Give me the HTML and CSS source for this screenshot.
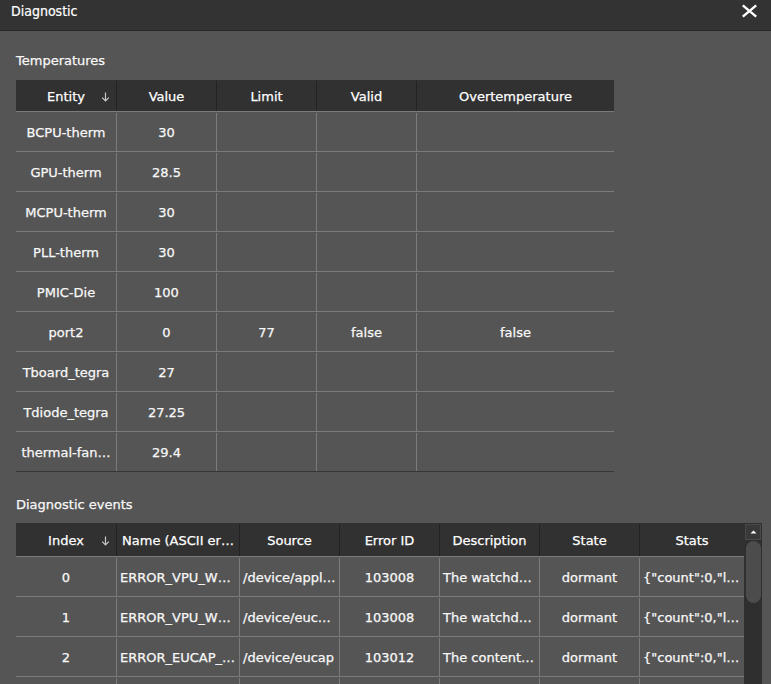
FILE: index.html
```html
<!DOCTYPE html>
<html lang="en">
<head>
<meta charset="utf-8">
<title>Diagnostic</title>
<link rel="stylesheet" href="styles.css">
</head>
<body>
<header class="titlebar">
  <span class="title">Diagnostic</span>
  <svg class="close" width="17" height="16" viewBox="0 0 17 16" aria-label="Close">
    <path d="M1.8 2.4 L15.2 13.6 M15.2 2.4 L1.8 13.6" stroke="#ffffff" stroke-width="2.4" fill="none"/>
  </svg>
</header>
<main class="content">
  <h2 class="section-label">Temperatures</h2>
  <div class="grid temps">
    <div class="row head">
      <div class="cell sortable">Entity<svg class="sort" width="9" height="10" viewBox="0 0 9 10"><path d="M4.5 0.5 V9 M1.2 5.6 L4.5 9 L7.8 5.6" stroke="#c8c8c8" stroke-width="1.2" fill="none"/></svg></div>
      <div class="cell">Value</div>
      <div class="cell">Limit</div>
      <div class="cell">Valid</div>
      <div class="cell">Overtemperature</div>
    </div>
    <div class="row"><div class="cell">BCPU-therm</div><div class="cell">30</div><div class="cell"></div><div class="cell"></div><div class="cell"></div></div>
    <div class="row"><div class="cell">GPU-therm</div><div class="cell">28.5</div><div class="cell"></div><div class="cell"></div><div class="cell"></div></div>
    <div class="row"><div class="cell">MCPU-therm</div><div class="cell">30</div><div class="cell"></div><div class="cell"></div><div class="cell"></div></div>
    <div class="row"><div class="cell">PLL-therm</div><div class="cell">30</div><div class="cell"></div><div class="cell"></div><div class="cell"></div></div>
    <div class="row"><div class="cell">PMIC-Die</div><div class="cell">100</div><div class="cell"></div><div class="cell"></div><div class="cell"></div></div>
    <div class="row"><div class="cell">port2</div><div class="cell">0</div><div class="cell">77</div><div class="cell">false</div><div class="cell">false</div></div>
    <div class="row"><div class="cell">Tboard_tegra</div><div class="cell">27</div><div class="cell"></div><div class="cell"></div><div class="cell"></div></div>
    <div class="row"><div class="cell">Tdiode_tegra</div><div class="cell">27.25</div><div class="cell"></div><div class="cell"></div><div class="cell"></div></div>
    <div class="row"><div class="cell">thermal-fan…</div><div class="cell">29.4</div><div class="cell"></div><div class="cell"></div><div class="cell"></div></div>
  </div>

  <h2 class="section-label events-label">Diagnostic events</h2>
  <div class="events-wrap">
    <div class="grid events">
      <div class="row head">
        <div class="cell sortable">Index<svg class="sort" width="9" height="10" viewBox="0 0 9 10"><path d="M4.5 0.5 V9 M1.2 5.6 L4.5 9 L7.8 5.6" stroke="#c8c8c8" stroke-width="1.2" fill="none"/></svg></div>
        <div class="cell">Name (ASCII er…</div>
        <div class="cell">Source</div>
        <div class="cell">Error ID</div>
        <div class="cell">Description</div>
        <div class="cell">State</div>
        <div class="cell">Stats</div>
      </div>
      <div class="row">
        <div class="cell">0</div><div class="cell left">ERROR_VPU_W…</div><div class="cell left">/device/appl…</div><div class="cell">103008</div><div class="cell left">The watchd…</div><div class="cell">dormant</div><div class="cell left">{"count":0,"l…</div>
      </div>
      <div class="row">
        <div class="cell">1</div><div class="cell left">ERROR_VPU_W…</div><div class="cell left">/device/euc…</div><div class="cell">103008</div><div class="cell left">The watchd…</div><div class="cell">dormant</div><div class="cell left">{"count":0,"l…</div>
      </div>
      <div class="row">
        <div class="cell">2</div><div class="cell left">ERROR_EUCAP_…</div><div class="cell left">/device/eucap</div><div class="cell">103012</div><div class="cell left">The content…</div><div class="cell">dormant</div><div class="cell left">{"count":0,"l…</div>
      </div>
      <div class="row">
        <div class="cell"></div><div class="cell"></div><div class="cell"></div><div class="cell"></div><div class="cell"></div><div class="cell"></div><div class="cell"></div>
      </div>
    </div>
    <div class="scrollbar">
      <div class="sb-up"><svg width="7" height="4" viewBox="0 0 7 4"><path d="M0.5 3.5 L3.5 0.5 L6.5 3.5 Z" fill="#ffffff"/></svg></div>
      <div class="sb-handle"></div>
    </div>
  </div>
</main>
</body>
</html>
```

FILE: styles.css
```css
html, body {
  margin: 0;
  padding: 0;
}

body {
  background: #555555;
  color: #f8f8f8;
  font-family: "DejaVu Sans", "Noto Sans", sans-serif;
  font-size: 13px;
  width: 771px;
  height: 684px;
  overflow: hidden;
}

.titlebar {
  height: 27px;
  padding: 3px 13px 0 11px;
  background: #333333;
  border-bottom: 1px solid #272727;
  display: flex;
  justify-content: space-between;
  align-items: flex-start;
}

.title {
  font-family: "Liberation Sans Narrow", "DejaVu Sans Condensed", sans-serif;
  font-size: 14px;
  line-height: 16px;
  color: #ffffff;
  -webkit-text-stroke: 0.2px #ffffff;
}

.close {
  display: block;
  margin-top: 0;
}

.content {
  padding-left: 16px;
}

.section-label {
  margin: 22px 0 11px;
  font-size: 13px;
  line-height: 16px;
  font-weight: normal;
  color: #f8f8f8;
  -webkit-text-stroke: 0.25px #f8f8f8;
}

.events-label {
  margin: 25px 0 10px;
}

.grid {
  display: flex;
  flex-direction: column;
}

.row {
  display: grid;
  flex-shrink: 0;
  height: 40px;
  box-sizing: border-box;
  border-top: 1px solid #7b7b7b;
  padding-top: 1px;
  -webkit-text-stroke: 0.25px #f8f8f8;
}

.temps {
  width: 598px;
  border-bottom: 1px solid #363636;
}

.temps .row {
  grid-template-columns: 101px 100px 100px 100px 197px;
}

.events .row {
  grid-template-columns: 101px 123px 100px 100px 100px 100px 104px;
}

.row.head {
  background: #313131;
  border-top: none;
  height: 31px;
  color: #ffffff;
  -webkit-text-stroke: 0.25px #ffffff;
}

.events .row.head {
  height: 33px;
}

.cell {
  position: relative;
  display: flex;
  align-items: center;
  justify-content: center;
  padding: 0 3px;
  box-sizing: border-box;
  border-right: 1px solid #7b7b7b;
  white-space: nowrap;
  overflow: hidden;
  min-width: 0;
}

.cell:last-child {
  border-right: none;
}

.head .cell {
  border-right-color: #222222;
}

.cell.left {
  justify-content: flex-start;
}

.sort {
  position: absolute;
  right: 6px;
  top: 50%;
  margin-top: -4px;
}

.events-wrap {
  display: flex;
  height: 161px;
  overflow: hidden;
}

.events {
  width: 728px;
  flex-shrink: 0;
}

.scrollbar {
  width: 18px;
  background: #2f2f2f;
  display: flex;
  flex-direction: column;
  align-items: center;
}

.sb-up {
  width: 16px;
  height: 16px;
  margin-top: 1px;
  box-sizing: border-box;
  border: 1px solid #4a4a4a;
  background: #393939;
  display: flex;
  align-items: center;
  justify-content: center;
}

.sb-up svg {
  display: block;
}

.sb-handle {
  width: 15px;
  height: 62px;
  margin-top: 1px;
  border-radius: 8px;
  background: #4c4c4c;
}
```
